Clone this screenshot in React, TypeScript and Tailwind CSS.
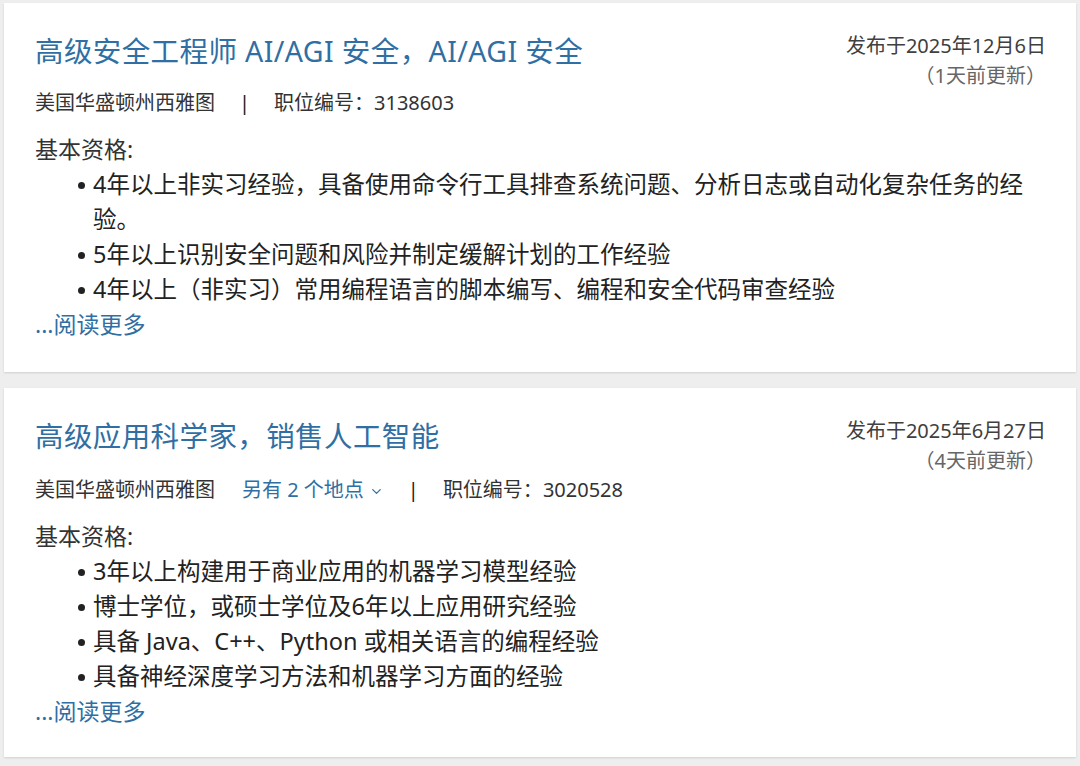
import React from "react";
import { ChevronDown } from "lucide-react";

const FONT = { fontFamily: '"Noto Sans", "Noto Sans CJK SC", sans-serif' };

type Job = {
  title: string;
  date: string;
  updated: string;
  id: string;
  more?: string;
  items: string[];
};

const jobs: Job[] = [
  {
    title: "高级安全工程师 AI/AGI 安全，AI/AGI 安全",
    date: "发布于2025年12月6日",
    updated: "（1天前更新）",
    id: "3138603",
    items: [
      "4年以上非实习经验，具备使用命令行工具排查系统问题、分析日志或自动化复杂任务的经验。",
      "5年以上识别安全问题和风险并制定缓解计划的工作经验",
      "4年以上（非实习）常用编程语言的脚本编写、编程和安全代码审查经验",
    ],
  },
  {
    title: "高级应用科学家，销售人工智能",
    date: "发布于2025年6月27日",
    updated: "（4天前更新）",
    id: "3020528",
    more: "另有 2 个地点",
    items: [
      "3年以上构建用于商业应用的机器学习模型经验",
      "博士学位，或硕士学位及6年以上应用研究经验",
      "具备 Java、C++、Python 或相关语言的编程经验",
      "具备神经深度学习方法和机器学习方面的经验",
    ],
  },
];

function Card({ job }: { job: Job }) {
  return (
    <div className="bg-white h-[369px] shadow-[0_1px_2px_rgba(0,0,0,0.13)] pl-[31px] pr-[30px] pt-[28px]">
      <div className="flex justify-between items-start">
        <div className="text-[28.5px] leading-[40px] text-[#2f6fa3] tracking-[0.4px]">
          {job.title}
        </div>
        <div className="flex flex-col items-end text-[20px] leading-[30px]">
          <div className="text-[#404040]">{job.date}</div>
          <div className="text-[#666666]">{job.updated}</div>
        </div>
      </div>
      <div className={"flex items-center text-[20px] leading-[30px] text-[#333333] " + (job.more ? "-mt-[1px]" : "-mt-[3px]")}>
        <span>美国华盛顿州西雅图</span>
        {job.more && (
          <span className="ml-[27px] flex items-center text-[#2f6fa3]">
            {job.more}
            <ChevronDown size={15} strokeWidth={2} className="ml-[5px] mt-[3px]" />
          </span>
        )}
        <span className="mx-[24px] text-[#222]">|</span>
        <span>职位编号：{job.id}</span>
      </div>
      <div className="text-[23px] leading-[35px] text-[#333333] mt-[14px]">基本资格:</div>
      <ul className="text-[23.5px] leading-[35px] text-[#222222] pr-[20px]">
        {job.items.map((it, i) => (
          <li key={i} className="flex">
            <span className="w-[58px] shrink-0 flex justify-end pr-[8px] pt-[15px]">
              <span className="block w-[7px] h-[7px] rounded-full bg-[#222]" />
            </span>
            <span>{it}</span>
          </li>
        ))}
      </ul>
      <div className="text-[23px] leading-[35px] text-[#2f6fa3]">...阅读更多</div>
    </div>
  );
}

export default function App() {
  return (
    <div style={FONT} className="bg-[#eeeeee] w-[1080px] h-[766px] overflow-hidden pt-[3px] px-[4px] flex flex-col gap-[16px]">
      {jobs.map((j, i) => (
        <Card key={i} job={j} />
      ))}
    </div>
  );
}
